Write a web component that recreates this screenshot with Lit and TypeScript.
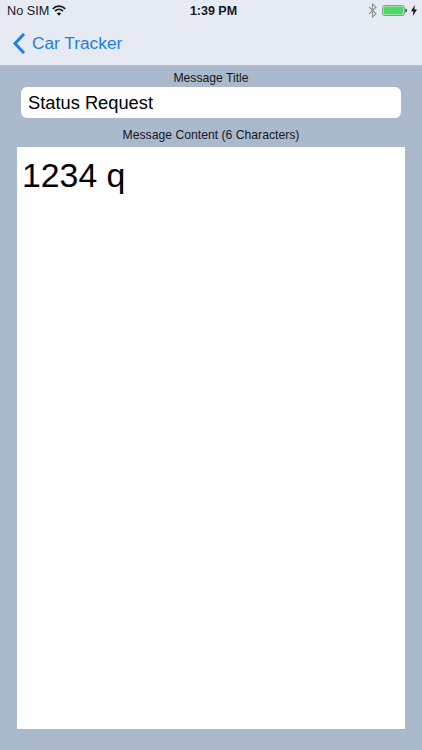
import { LitElement, html, css } from "lit";
import { customElement } from "lit/decorators.js";

@customElement("app-root")
export class AppRoot extends LitElement {
  static styles = css`
    :host {
      display: flex;
      flex-direction: column;
      width: 422px;
      height: 750px;
      overflow: hidden;
      background: #abb9cc;
      font-family: "Liberation Sans", Arial, sans-serif;
      color: #000;
    }
    .top {
      height: 65px;
      flex: none;
      background: #e6eaf2;
      border-bottom: 1px solid #b4bdca;
      display: flex;
      flex-direction: column;
    }
    .status {
      height: 21px;
      flex: none;
      display: grid;
      grid-template-columns: 1fr auto 1fr;
      align-items: center;
      padding: 0 5px 0 7px;
      font-size: 12.7px;
      color: #15181c;
    }
    .left {
      display: flex;
      align-items: center;
      gap: 3px;
    }
    .time {
      font-weight: 700;
      font-size: 12.5px;
      margin-left: 3px;
    }
    .right {
      display: flex;
      align-items: center;
      justify-content: flex-end;
      gap: 5px;
    }
    .bolt { margin-left: -1px; }
    .nav {
      flex: 1;
      display: flex;
      align-items: center;
      gap: 7px;
      padding: 0 0 0 13px;
      color: #1b7fe8;
      font-size: 17.3px;
    }
    .field-label {
      text-align: center;
      font-size: 12.2px;
      line-height: 14px;
      color: #14181e;
    }
    .body {
      flex: 1;
      display: flex;
      flex-direction: column;
      padding: 5px 17px 21px 17px;
    }
    .title {
      margin: 2px 4px 0 4px;
      height: 31px;
      flex: none;
      box-sizing: border-box;
      background: #fff;
      border-radius: 6px;
      display: flex;
      align-items: center;
      padding: 0 7px;
      font-size: 18.3px;
    }
    .content-label { margin-top: 10px; }
    .content {
      margin-top: 5px;
      flex: 1;
      background: #fff;
      padding: 7px 5px;
      font-size: 33.8px;
      line-height: 43px;
    }
  `;

  render() {
    return html`
      <div class="top">
        <div class="status">
          <div class="left">
            <span>No SIM</span>
            <svg width="14" height="11" viewBox="0 0 14 11" fill="none" stroke="#15181c" stroke-width="1.7">
              <path d="M.8 3.8 C4.3 .3 9.7 .3 13.2 3.8" />
              <path d="M3 6.1 C5.3 3.9 8.7 3.9 11 6.1" />
              <path d="M7 10.8 L4.8 8.4 C6 7.2 8 7.2 9.2 8.4 Z" fill="#15181c" stroke="none" />
            </svg>
          </div>
          <div class="time">1:39 PM</div>
          <div class="right">
            <svg width="9" height="15" viewBox="0 0 9 15" fill="none" stroke="#8d9299" stroke-width="1.1">
              <path d="M1 4 L8 10.8 L4.5 14 V1 L8 4.2 L1 11" />
            </svg>
            <svg width="25" height="11" viewBox="0 0 25 11">
              <rect x=".5" y=".5" width="22" height="10" rx="2" fill="none" stroke="#8a9a8c" />
              <rect x="1.5" y="1.5" width="20" height="8" rx="1" fill="#4cd964" />
              <path d="M23.4 3.7 h.4 a1.2 1.2 0 0 1 1.2 1.2 v1.2 a1.2 1.2 0 0 1 -1.2 1.2 h-.4 Z" fill="#3c4046" />
            </svg>
            <svg class="bolt" width="6" height="11" viewBox="0 0 6 11">
              <path d="M3.8 0 L0 6.2 H2.4 L1.8 11 L6 4.5 H3.4 Z" fill="#15181c" />
            </svg>
          </div>
        </div>
        <div class="nav">
          <svg width="12" height="21" viewBox="0 0 12 21" fill="none" stroke="#1b7fe8" stroke-width="3" stroke-linecap="square">
            <path d="M10 2 L2 10.5 L10 19" />
          </svg>
          <span>Car Tracker</span>
        </div>
      </div>
      <div class="body">
        <div class="field-label">Message Title</div>
        <div class="title">Status Request</div>
        <div class="field-label content-label">Message Content (6 Characters)</div>
        <div class="content">1234 q</div>
      </div>
    `;
  }
}
